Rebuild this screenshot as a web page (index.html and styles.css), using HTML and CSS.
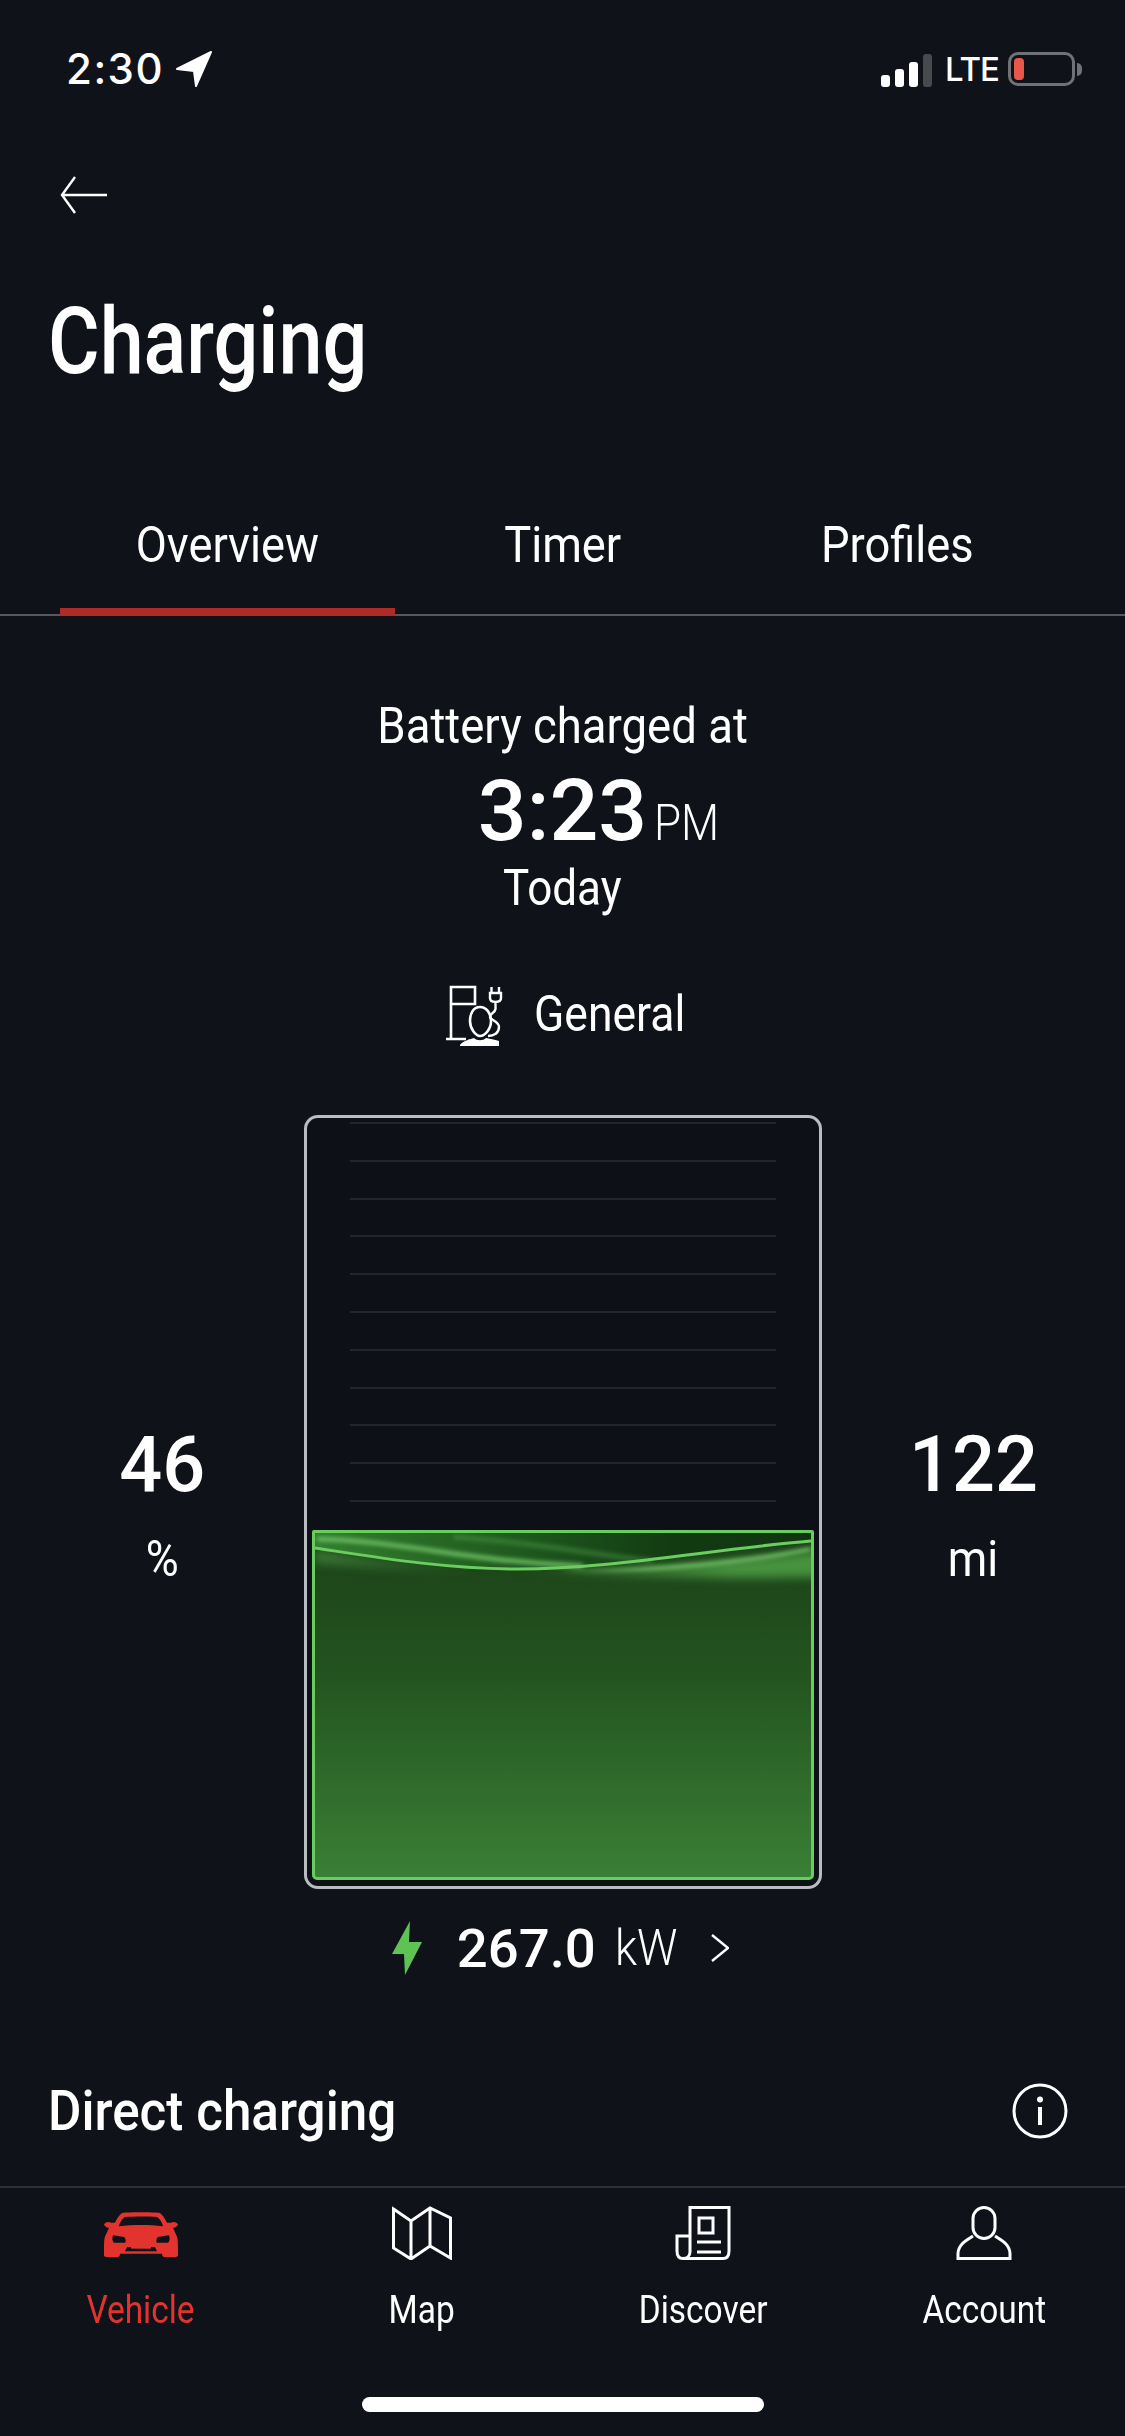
FILE: index.html
```html
<!DOCTYPE html>
<html lang="en">
<head>
<meta charset="utf-8">
<title>Charging</title>
<link rel="stylesheet" href="styles.css">
</head>
<body>
<div class="app">
  <header class="status">
    <div class="status-left">
      <span class="clock">2:30</span>
      <svg class="loc" viewBox="0 0 36 36"><path d="M35 1 20 35 18 20 1 18Z" fill="#fff" stroke="#fff" stroke-width="2" stroke-linejoin="round"/></svg>
    </div>
    <div class="status-right">
      <div class="signal"><i class="b1"></i><i class="b2"></i><i class="b3"></i><i class="b4"></i></div>
      <span class="lte">LTE</span>
      <div class="batt"><i></i></div>
      <div class="nub"></div>
    </div>
  </header>
  <div class="back">
    <svg class="back-icon" viewBox="0 0 48 38"><path d="M47 19H2M15 1 2 19l13 18" fill="none" stroke="#fff" stroke-width="2.4"/></svg>
  </div>
  <h1 class="title"><span class="narrow">Charging</span></h1>
  <nav class="tabs">
    <div class="tab active"><span class="tab-text">Overview</span></div>
    <div class="tab"><span class="tab-text">Timer</span></div>
    <div class="tab"><span class="tab-text">Profiles</span></div>
  </nav>
  <main class="content">
    <p class="label"><span class="label-text">Battery charged at</span></p>
    <div class="eta"><span></span><span class="eta-time">3:23</span><span class="eta-unit">PM</span></div>
    <p class="label today"><span class="label-text">Today</span></p>
    <div class="profile">
      <svg class="profile-icon" viewBox="0 0 60 64">
        <path d="M7 57V5H31V22H7M2 57H22" fill="none" stroke="#fff" stroke-width="2.6"/>
        <path d="M36 25C29 25 26 32 26 39C26 47 32 54 36 54C41 54 47 47 47 39C47 32 43 25 36 25Z" fill="none" stroke="#fff" stroke-width="2.6"/>
        <path d="M47.500 5V11M55 5V11M46 11H57V16C57 19 54 20 51.500 20C49 20 46 19 46 16ZM51.500 20V27C51 31 46 31 46 35C46 38 55 39 55 45C55 51 50 54 44 54" fill="none" stroke="#fff" stroke-width="2.4"/>
        <path d="M16 64V63C19 59 26 57 30 56C33 59 39 59 42 56C47 57 52 58 55 59V64Z" fill="#fff"/>
      </svg>
      <span class="profile-name">General</span>
    </div>
    <div class="gauge">
      <div class="stat stat-left"><span class="stat-value">46</span><span class="stat-unit">%</span></div>
      <div class="battery">
        <div class="scale"><i></i><i></i><i></i><i></i><i></i><i></i><i></i><i></i><i></i><i></i><i></i></div>
        <div class="fill">
          <svg class="wave" viewBox="0 0 500 60" preserveAspectRatio="none">
            <defs>
              <filter id="soft" filterUnits="userSpaceOnUse" x="-30" y="-30" width="560" height="120"><feGaussianBlur stdDeviation="2"/></filter>
              <filter id="softer" filterUnits="userSpaceOnUse" x="-30" y="-30" width="560" height="120"><feGaussianBlur stdDeviation="5"/></filter>
              <linearGradient id="dark" x1="0" x2="1" y1="0" y2="0">
                <stop offset="0" stop-color="#327e2d"/>
                <stop offset="0.4" stop-color="#1f5a1e"/>
                <stop offset="0.72" stop-color="#123b12"/>
                <stop offset="1" stop-color="#103610"/>
              </linearGradient>
              <linearGradient id="fadeIn" gradientUnits="userSpaceOnUse" x1="190" x2="420" y1="0" y2="0">
                <stop offset="0" stop-color="#55ad4b" stop-opacity="0"/>
                <stop offset="1" stop-color="#55ad4b" stop-opacity="1"/>
              </linearGradient>
              <linearGradient id="fadeOut" gradientUnits="userSpaceOnUse" x1="0" x2="170" y1="0" y2="0">
                <stop offset="0" stop-color="#488f40" stop-opacity="1"/>
                <stop offset="1" stop-color="#488f40" stop-opacity="0"/>
              </linearGradient>
              <linearGradient id="bandFade" gradientUnits="userSpaceOnUse" x1="240" x2="340" y1="0" y2="0">
                <stop offset="0" stop-color="#78c86d" stop-opacity="0"/>
                <stop offset="1" stop-color="#78c86d" stop-opacity="1"/>
              </linearGradient>
            </defs>
            <path d="M0 0H500V8C400 16 300 36 205 36C130 36 60 24 0 15Z" fill="url(#dark)"/>
            <path d="M0 17C60 26 110 32 170 36V40C110 38 60 36 0 30Z" fill="url(#fadeOut)" opacity=".7" filter="url(#softer)"/>
            <path d="M190 38C320 38 420 28 510 18V44C420 46 320 44 190 40Z" fill="url(#fadeIn)" opacity=".75" filter="url(#softer)"/>
            <path d="M2 6C90 8 150 28 270 33" fill="none" stroke="#6cbc64" stroke-width="4.500" filter="url(#soft)"/>
            <path d="M140 4C230 10 280 22 340 28" fill="none" stroke="#4d9a48" stroke-width="5" opacity=".5" filter="url(#soft)"/>
            <path d="M250 38C340 38 420 32 500 16" fill="none" stroke="url(#bandFade)" stroke-width="3.500" filter="url(#soft)"/>
            <path d="M0 15C60 24 130 36 205 36C300 36 400 16 500 8" fill="none" stroke="#6bcd60" stroke-width="3"/>
          </svg>
        </div>
      </div>
      <div class="stat"><span class="stat-value">122</span><span class="stat-unit">mi</span></div>
    </div>
    <div class="power">
      <svg class="bolt" viewBox="0 0 30 54"><path d="M18 0 0 33H12L13 54 30 21H17Z" fill="#5ec254"/></svg>
      <span class="power-value">267.0</span>
      <span class="power-unit">kW</span>
      <svg class="chev" viewBox="0 0 18 28"><path d="M1 1 17 14 1 27" fill="none" stroke="#fff" stroke-width="2.400"/></svg>
    </div>
    <div class="direct">
      <h2 class="direct-title">Direct charging</h2>
      <svg class="info" viewBox="0 0 56 56"><circle cx="28" cy="28" r="26" fill="none" stroke="#fff" stroke-width="3"/><circle cx="28" cy="16.500" r="3" fill="#fff"/><path d="M28 24V42" stroke="#fff" stroke-width="4"/></svg>
    </div>
  </main>
  <footer class="nav">
    <div class="nav-items">
      <div class="nav-item on">
        <svg class="nav-icon car" viewBox="0 0 74 54" preserveAspectRatio="none"><path fill="#e2332f" d="M19 1C25 0 49 0 55 1C58 2 61 8 63 13H67C69 11 73 12 74 15C73 18 71 19 69 19L72 27C74 31 74 35 74 52C74 54 72 54 70 54H61C59 54 58 53 58 50H16C16 53 15 54 13 54H4C2 54 0 54 0 52C0 35 0 31 2 27L5 19C3 19 1 18 0 15C1 12 5 11 7 13H11C13 8 16 2 19 1ZM21 6C19 7 16 12 15 17C28 15 46 15 59 17C58 12 55 7 53 6C46 5 28 5 21 6Z"/><path fill="#0e1218" d="M9 28 20 30C22 32 22 36 21 37H10C8 35 8 31 9 28ZM65 28 54 30C52 32 52 36 53 37H64C66 35 66 31 65 28ZM23 42H51L53 47H21Z"/><path fill="#e2332f" d="M27 42H47V44H27Z"/></svg>
        <span class="nav-label">Vehicle</span>
      </div>
      <div class="nav-item">
        <svg class="nav-icon" viewBox="0 0 60 54"><path d="M1.500 3 19 15 38 2 58.500 12V52L38 40 19 53 1.500 42ZM19 15V53M38 2V40" fill="none" stroke="#fff" stroke-width="3"/></svg>
        <span class="nav-label">Map</span>
      </div>
      <div class="nav-item">
        <svg class="nav-icon" viewBox="0 0 56 54"><path d="M15 30V1.500H54V45C54 50 52 52.500 48 52.500H8C4 52.500 2 50 2 45V30H15V46C15 50 12 52.500 8 52.500" fill="none" stroke="#fff" stroke-width="3"/><path d="M24 12H38V27H24ZM22 36H46M22 46H46" fill="none" stroke="#fff" stroke-width="3"/></svg>
        <span class="nav-label">Discover</span>
      </div>
      <div class="nav-item">
        <svg class="nav-icon" viewBox="0 0 56 54"><rect x="17" y="1.500" width="22" height="31" rx="11" fill="none" stroke="#fff" stroke-width="3"/><path d="M17 30C11 34 2 38 2 48V52.500H54V48C54 38 45 34 39 30" fill="none" stroke="#fff" stroke-width="3"/></svg>
        <span class="nav-label">Account</span>
      </div>
    </div>
    <div class="home"></div>
  </footer>
</div>
</body>
</html>
```
FILE: styles.css
```css
* { box-sizing: border-box; }
html, body { margin: 0; padding: 0; background: #0f1319; }
body { font-family: Roboto, "Liberation Sans", sans-serif; color: #fff; }
.app { width: 1125px; height: 2436px; display: flex; flex-direction: column; overflow: hidden; background: #0f1319; }
svg { display: block; flex: none; }

.status { height: 120px; padding: 46px 43px 0 66px; display: flex; justify-content: space-between; align-items: flex-start; }
.status-left { display: flex; align-items: center; gap: 12px; }
.clock { font-family: Inter, Roboto, sans-serif; font-size: 42px; line-height: 46px; font-weight: 500; letter-spacing: 1.500px; }
.loc { width: 36px; height: 36px; }
.status-right { display: flex; align-items: center; height: 46px; }
.signal { display: flex; align-items: flex-end; gap: 5px; height: 33px; margin-top: 2px; }
.signal i { width: 9px; border-radius: 3px; background: #fff; display: block; }
.signal .b1 { height: 12px; }
.signal .b2 { height: 18px; }
.signal .b3 { height: 25px; }
.signal .b4 { height: 33px; background: #47494d; }
.lte { font-family: Inter, Roboto, sans-serif; font-size: 33px; line-height: 40px; font-weight: 500; margin-left: 13px; width: 63px; letter-spacing: -1px; }
.batt { width: 67px; height: 34px; border: 3px solid #707277; border-radius: 10px; padding: 3px; }
.batt i { display: block; width: 10px; height: 22px; border-radius: 4px; background: #e8574a; }
.nub { width: 5px; height: 13px; margin-left: 2px; background: #707277; border-radius: 0 6px 6px 0; }

.back { height: 150px; padding-left: 60px; display: flex; align-items: center; }
.back-icon { width: 48px; height: 38px; }

.title { margin: 0; padding: 22px 0 0 48px; height: 130px; font-size: 92px; line-height: 100px; font-weight: 500; }
.narrow { display: inline-block; transform: scaleX(.86); transform-origin: left center; }

.tabs { height: 216px; padding: 0 60px; display: flex; border-bottom: 2px solid #55585c; align-items: flex-end; flex: none; }
.tab { width: 335px; height: 97px; text-align: center; font-size: 50px; line-height: 56px; font-weight: 400; }
.tab.active { border-bottom: 8px solid #b02a26; margin-bottom: -2px; height: 99px; }
.tab-text { display: inline-block; transform: scaleX(.905); }

.content { flex: 1; min-height: 0; display: flex; flex-direction: column; padding-top: 82px; }
.label { margin: 0; text-align: center; font-size: 50px; line-height: 56px; font-weight: 400; }
.label-text { display: inline-block; transform: scaleX(.91); }
.today .label-text { transform: scaleX(.88); }
.eta { display: grid; grid-template-columns: 1fr auto 1fr; align-items: baseline; height: 99px; margin-top: 7px; }
.eta-time { font-size: 86px; line-height: 100px; font-weight: 500; }
.eta-unit { font-size: 50px; line-height: 56px; font-weight: 300; margin-left: 7px; transform: scaleX(.88); transform-origin: left center; }
.profile { display: flex; align-items: center; justify-content: center; gap: 30px; margin-top: 66px; height: 64px; padding-left: 22px; }
.profile-icon { width: 60px; height: 64px; }
.profile-name { font-size: 50px; line-height: 56px; font-weight: 400; margin-right: -2px; transform: scaleX(.89); transform-origin: left center; }

.gauge { display: grid; grid-template-columns: 1fr 518px 1fr; margin-top: 69px; }
.stat { display: flex; flex-direction: column; align-items: center; padding-top: 305px; }
.stat-left { padding-left: 22px; }
.stat-value { font-size: 78px; line-height: 90px; font-weight: 500; transform: scaleX(.97); }
.stat-unit { font-size: 50px; line-height: 56px; font-weight: 400; margin-top: 21px; transform: scaleX(.9); }
.battery { height: 774px; border: 3px solid #b9bcc0; border-radius: 14px; display: flex; flex-direction: column; padding: 4px 5px 6px; background: #0d1017; }
.scale { display: flex; flex-direction: column; gap: 35.800px; padding: 0 38px; height: 408px; flex: none; }
.scale i { display: block; height: 2px; background: #232629; }
.fill { flex: 1; border: 3px solid #69cc5e; border-radius: 2px 2px 5px 5px; background: linear-gradient(180deg, #1d451a 8%, #23531f 40%, #3a7f36 100%); overflow: hidden; }
.wave { width: 100%; height: 60px; }

.power { display: flex; align-items: center; justify-content: center; margin-top: 30px; height: 58px; padding-right: 4px; }
.bolt { width: 30px; height: 54px; }
.power-value { font-size: 54.500px; line-height: 58px; font-weight: 500; margin-left: 35px; }
.power-unit { font-size: 50px; line-height: 58px; font-weight: 300; margin-left: 19px; transform: scaleX(.9); transform-origin: left center; }
.chev { width: 18px; height: 28px; margin-left: 27px; }

.direct { display: flex; justify-content: space-between; align-items: center; padding: 0 57px 0 48px; margin-top: 104px; height: 60px; }
.direct-title { margin: 0; font-size: 56px; line-height: 60px; font-weight: 500; transform: scaleX(.915); transform-origin: left center; }
.info { width: 56px; height: 56px; }

.nav { height: 250px; flex: none; border-top: 2px solid #2c2f34; display: flex; flex-direction: column; align-items: center; }
.nav-items { display: grid; grid-template-columns: repeat(4, 1fr); width: 100%; padding-top: 18px; }
.nav-item { display: flex; flex-direction: column; align-items: center; gap: 28px; font-size: 38px; line-height: 44px; font-weight: 400; }
.nav-label { transform: scaleX(.88); }
.nav-item.on { color: #e2332f; }
.nav-icon { height: 54px; }
.car { width: 74px; height: 45px; margin: 6px 0 3px; }
.home { width: 402px; height: 15px; margin-top: 65px; border-radius: 8px; background: #fff; }
```
